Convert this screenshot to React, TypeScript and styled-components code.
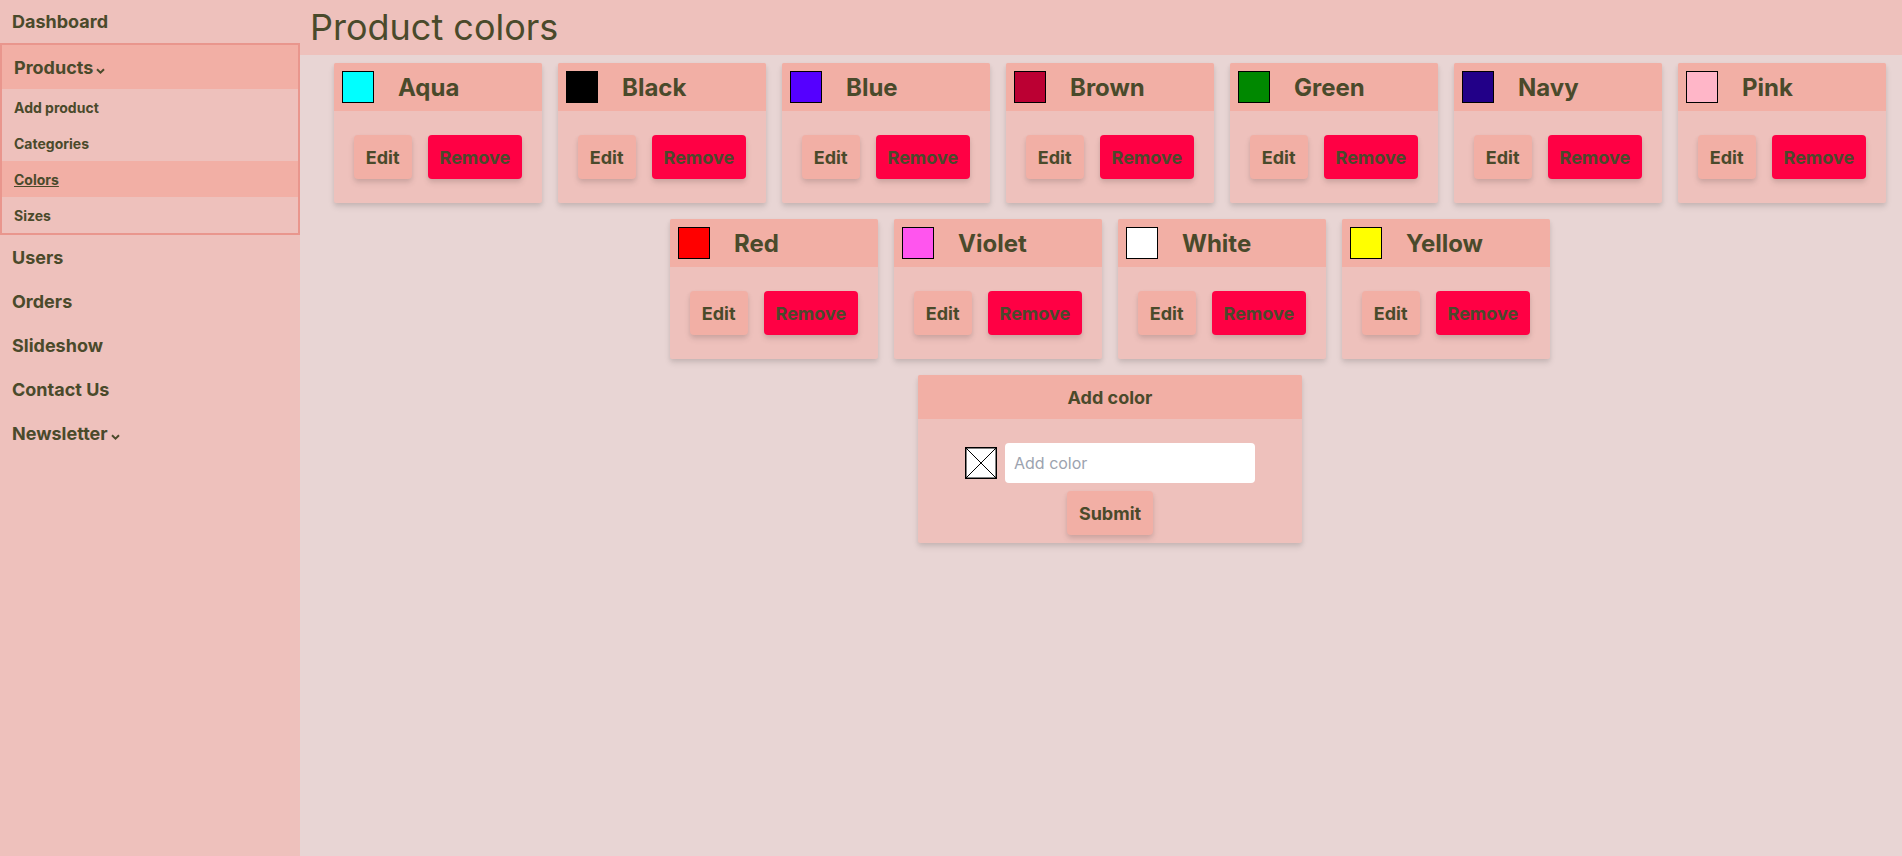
import React from "react";
import styled, { createGlobalStyle } from "styled-components";

const GlobalStyle = createGlobalStyle`
  html, body { margin: 0; padding: 0; }
  body {
    font-family: Inter, "Noto Sans", "Liberation Sans", sans-serif;
    color: #4a4a2b;
    background: #e8d5d4;
  }
  * { box-sizing: border-box; }
`;

const TEXT = "#4a4a2b";
const LIGHT = "#eec1bc";
const STRONG = "#f2afa5";

const Layout = styled.div`
  display: flex;
  min-height: 100vh;
  width: 100%;
`;

const Sidebar = styled.nav`
  width: 300px;
  flex: 0 0 300px;
  background: ${LIGHT};
  display: flex;
  flex-direction: column;
`;

const NavItem = styled.div<{ $h?: number }>`
  height: ${(p) => p.$h ?? 44}px;
  display: flex;
  align-items: center;
  padding: 0 12px;
  font-size: 18px;
  font-weight: 700;
  color: ${TEXT};
`;

const Group = styled.div`
  border: 2px solid #e9968d;
  display: flex;
  flex-direction: column;
`;

const GroupHead = styled.div`
  height: 44px;
  display: flex;
  align-items: center;
  padding: 0 12px;
  background: ${STRONG};
  font-size: 18px;
  font-weight: 700;
`;

const SubItem = styled.div<{ $active?: boolean }>`
  height: 36px;
  display: flex;
  align-items: center;
  padding: 0 12px;
  font-size: 14px;
  font-weight: 700;
  background: ${(p) => (p.$active ? STRONG : "transparent")};
  text-decoration: ${(p) => (p.$active ? "underline" : "none")};
`;

const Chevron = styled.svg`
  margin-left: 3px;
  margin-top: 7px;
`;

const Main = styled.main`
  flex: 1;
  display: flex;
  flex-direction: column;
  background: #e8d5d4;
`;

const TopBar = styled.header`
  height: 55px;
  background: ${LIGHT};
  padding: 6px 10px 0;
`;

const Title = styled.h1`
  margin: 0;
  font-size: 36px;
  font-weight: 400;
  line-height: 1.21;
  color: ${TEXT};
`;

const Content = styled.section`
  padding: 0 0 0 18px;
  display: flex;
  flex-direction: column;
  align-items: center;
`;

const Grid = styled.div`
  display: flex;
  flex-wrap: wrap;
  justify-content: center;
  width: 100%;
`;

const Card = styled.div<{ $w?: number }>`
  width: ${(p) => p.$w ?? 208}px;
  margin: 8px;
  background: ${LIGHT};
  box-shadow: 0 4px 6px rgba(0, 0, 0, 0.1), 0 2px 4px rgba(0, 0, 0, 0.06);
  border-radius: 2px;
  overflow: hidden;
`;

const CardHead = styled.div`
  height: 48px;
  background: ${STRONG};
  display: flex;
  align-items: center;
  padding: 0 8px;
`;

const Swatch = styled.div<{ $c: string }>`
  width: 32px;
  height: 32px;
  background: ${(p) => p.$c};
  border: 1.5px solid #000;
`;

const Name = styled.span`
  margin-left: 24px;
  font-size: 24px;
  font-weight: 700;
`;

const CardBody = styled.div`
  padding: 24px 20px;
  display: flex;
  justify-content: center;
  gap: 16px;
`;

const Button = styled.button<{ $danger?: boolean }>`
  height: 44px;
  padding: 0 12px;
  border: none;
  border-radius: 4px;
  font-family: inherit;
  font-size: 18px;
  font-weight: 700;
  color: ${TEXT};
  background: ${(p) => (p.$danger ? "#ff0044" : STRONG)};
  box-shadow: 0 4px 6px rgba(0, 0, 0, 0.1), 0 2px 4px rgba(0, 0, 0, 0.06);
  cursor: pointer;
`;

const AddHead = styled.div`
  height: 44px;
  background: ${STRONG};
  display: flex;
  align-items: center;
  justify-content: center;
  font-size: 18px;
  font-weight: 700;
`;

const AddBody = styled.div`
  padding: 24px 0 8px;
  display: flex;
  flex-direction: column;
  align-items: center;
  gap: 8px;
`;

const InputRow = styled.div`
  display: flex;
  align-items: center;
  gap: 8px;
`;

const TextInput = styled.input`
  width: 250px;
  height: 40px;
  border: none;
  border-radius: 4px;
  padding: 0 9px;
  font-family: inherit;
  font-size: 16px;
  background: #fff;
  color: ${TEXT};
  outline: none;
  &::placeholder { color: #9ca3af; }
`;

const colors: [string, string][] = [
  ["Aqua", "#00ffff"],
  ["Black", "#000000"],
  ["Blue", "#5500ff"],
  ["Brown", "#bb0033"],
  ["Green", "#008800"],
  ["Navy", "#220088"],
  ["Pink", "#ffb6c8"],
  ["Red", "#ff0000"],
  ["Violet", "#ff55ee"],
  ["White", "#ffffff"],
  ["Yellow", "#ffff00"],
];

const Down = () => (
  <Chevron width="9" height="6" viewBox="0 0 9 6">
    <path d="M1 1.2 L4.5 4.6 L8 1.2" fill="none" stroke={TEXT} strokeWidth="2" />
  </Chevron>
);

const EmptySwatch = () => (
  <svg width="32" height="32" viewBox="0 0 32 32">
    <rect x="0.75" y="0.75" width="30.5" height="30.5" fill="#fff" stroke="#000" strokeWidth="1.5" />
    <path d="M1 1 L31 31 M31 1 L1 31" stroke="#000" strokeWidth="1" />
  </svg>
);

export default function App() {
  return (
    <>
      <GlobalStyle />
      <Layout>
        <Sidebar>
          <NavItem $h={43}>Dashboard</NavItem>
          <Group>
            <GroupHead>
              Products
              <Down />
            </GroupHead>
            <SubItem>Add product</SubItem>
            <SubItem>Categories</SubItem>
            <SubItem $active>Colors</SubItem>
            <SubItem>Sizes</SubItem>
          </Group>
          <NavItem>Users</NavItem>
          <NavItem>Orders</NavItem>
          <NavItem>Slideshow</NavItem>
          <NavItem>Contact Us</NavItem>
          <NavItem>
            Newsletter
            <Down />
          </NavItem>
        </Sidebar>
        <Main>
          <TopBar>
            <Title>Product colors</Title>
          </TopBar>
          <Content>
            <Grid>
              {colors.map(([name, c]) => (
                <Card key={name}>
                  <CardHead>
                    <Swatch $c={c} />
                    <Name>{name}</Name>
                  </CardHead>
                  <CardBody>
                    <Button>Edit</Button>
                    <Button $danger>Remove</Button>
                  </CardBody>
                </Card>
              ))}
            </Grid>
            <Card $w={384}>
              <AddHead>Add color</AddHead>
              <AddBody>
                <InputRow>
                  <EmptySwatch />
                  <TextInput placeholder="Add color" />
                </InputRow>
                <Button>Submit</Button>
              </AddBody>
            </Card>
          </Content>
        </Main>
      </Layout>
    </>
  );
}
